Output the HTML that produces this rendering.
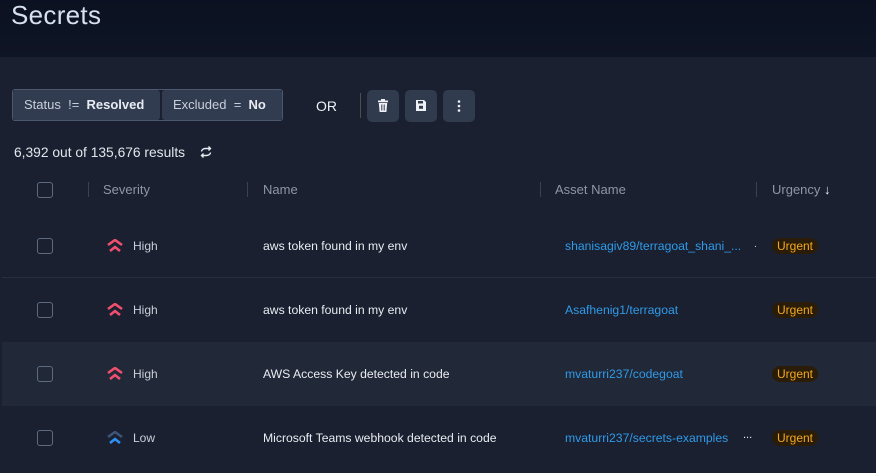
<!DOCTYPE html>
<html><head><style>
*{margin:0;padding:0;box-sizing:border-box}
body{width:876px;height:473px;overflow:hidden;background:#1a2030;font-family:"Liberation Sans",sans-serif;color:#e6e9ef;position:relative}
.hdr{position:absolute;left:0;top:0;width:876px;height:57px;background:linear-gradient(#0b1120,#0e1524)}
.hdr h1{position:absolute;left:11px;top:0px;font-size:26px;font-weight:400;color:#d6e0f0;letter-spacing:.3px}
.a{position:absolute;white-space:nowrap}
.chip{position:absolute;top:90px;height:30px;background:#323c50;border-radius:3px;font-size:13px;color:#c8cfdb;line-height:30px;padding-left:11px}
.chip b{color:#e8ecf2}
.btn{position:absolute;top:90px;width:32px;height:32px;background:#313b4e;border-radius:5px}
.hd{position:absolute;top:182px;font-size:13px;color:#8c96a8}
.sep{position:absolute;top:182px;width:1px;height:15px;background:#39424f}
.cb{position:absolute;left:37px;width:16px;height:16px;border:1.5px solid #5d6a80;border-radius:3px}
.row{position:absolute;left:2px;width:874px;height:64px}
.t{position:absolute;font-size:12.2px;color:#e8ebf0}
.sev{position:absolute;left:133px;font-size:12px;color:#c9ced8}
.asset{position:absolute;left:565px;font-size:12.2px;color:#2f9ae8}
.urg{position:absolute;left:772px;width:46px;height:16px;border-radius:8px;background:#2b1c08;color:#f0a81e;font-size:12px;line-height:16px;text-align:center}
</style></head><body>
<div class="hdr"><h1>Secrets</h1></div>
<div class="a" style="left:12px;top:89px;width:271px;height:32px;border:1.5px solid #4c5870;border-radius:3px"></div>
<div class="chip" style="left:13px;width:147px">Status&nbsp; != &nbsp;<b>Resolved</b></div>
<div class="chip" style="left:162px;width:120px">Excluded&nbsp; = &nbsp;<b>No</b></div>
<div class="a" style="left:316px;top:98px;font-size:14px;color:#eef1f5">OR</div>
<div class="a" style="left:360px;top:93px;width:1px;height:25px;background:#4a4f58"></div>
<div class="btn" style="left:367px"><svg width="32" height="32" viewBox="0 0 32 32"><path d="M11 10.5h10v1.8h-10z M14 9h4v1.5h-4z M11.8 13h8.4l-.8 9h-6.8z" fill="#eef1f5"/><path d="M14.8 14.5v6M17.2 14.5v6" stroke="#313b4e" stroke-width="1"/></svg></div>
<div class="btn" style="left:405px"><svg width="32" height="32" viewBox="0 0 32 32"><path d="M11 10h8l2 2v9h-10z" fill="#eef1f5"/><rect x="13" y="11" width="5" height="2.5" fill="#313b4e"/><rect x="14" y="15.8" width="4" height="3" fill="#313b4e"/></svg></div>
<div class="btn" style="left:443px"><svg width="32" height="32" viewBox="0 0 32 32"><circle cx="16" cy="11.5" r="1.3" fill="#eef1f5"/><circle cx="16" cy="16" r="1.3" fill="#eef1f5"/><circle cx="16" cy="20.5" r="1.3" fill="#eef1f5"/></svg></div>
<div class="a" style="left:14px;top:145px;font-size:13.8px;color:#e2e6ec">6,392 out of 135,676 results</div>
<svg class="a" style="left:199px;top:145px" width="14" height="14" viewBox="0 0 14 14"><path d="M2.5 6.5a4 3 0 0 1 4-3h5M9.5 1.5l2 2-2 2M11.5 7.5a4 3 0 0 1-4 3h-5M4.5 12.5l-2-2 2-2" fill="none" stroke="#e6e9ef" stroke-width="1.4"/></svg>
<div class="cb" style="top:182px"></div>
<div class="sep" style="left:88px"></div><div class="hd" style="left:103px">Severity</div>
<div class="sep" style="left:247px"></div><div class="hd" style="left:263px">Name</div>
<div class="sep" style="left:540px"></div><div class="hd" style="left:555px">Asset Name</div>
<div class="sep" style="left:756px"></div><div class="hd" style="left:772px">Urgency <span style="color:#e6e9ef">↓</span></div>

<div class="a" style="left:2px;top:277px;width:874px;height:1px;background:#262e3d"></div>
<div class="row" style="top:342px;background:#212837"></div>

<div class="cb" style="top:238px"></div>
<svg class="a" style="left:106px;top:239px" width="18" height="14" viewBox="0 0 18 14"><path d="M2 6l7-5 7 5M4 12l5-4 5 4" fill="none" stroke="#f0506e" stroke-width="2.6"/></svg>
<div class="sev" style="top:239px">High</div>
<div class="t" style="left:263px;top:239px">aws token found in my env</div>
<div class="asset" style="top:239px">shanisagiv89/terragoat_shani_...</div>
<div class="a" style="left:754px;top:239px;font-size:10px;color:#ddd">.</div>
<div class="urg" style="top:238px">Urgent</div>

<div class="cb" style="top:302px"></div>
<svg class="a" style="left:106px;top:303px" width="18" height="14" viewBox="0 0 18 14"><path d="M2 6l7-5 7 5M4 12l5-4 5 4" fill="none" stroke="#f0506e" stroke-width="2.6"/></svg>
<div class="sev" style="top:303px">High</div>
<div class="t" style="left:263px;top:303px">aws token found in my env</div>
<div class="asset" style="top:303px">Asafhenig1/terragoat</div>
<div class="urg" style="top:302px">Urgent</div>

<div class="cb" style="top:366px"></div>
<svg class="a" style="left:106px;top:367px" width="18" height="14" viewBox="0 0 18 14"><path d="M2 6l7-5 7 5M4 12l5-4 5 4" fill="none" stroke="#f0506e" stroke-width="2.6"/></svg>
<div class="sev" style="top:367px">High</div>
<div class="t" style="left:263px;top:367px">AWS Access Key detected in code</div>
<div class="asset" style="top:367px">mvaturri237/codegoat</div>
<div class="urg" style="top:366px">Urgent</div>

<div class="cb" style="top:430px"></div>
<svg class="a" style="left:106px;top:431px" width="18" height="14" viewBox="0 0 18 14"><path d="M2 6l7-5 7 5" fill="none" stroke="#3d5478" stroke-width="2.6"/><path d="M4 12l5-4 5 4" fill="none" stroke="#2f8ef0" stroke-width="2.6"/></svg>
<div class="sev" style="top:431px">Low</div>
<div class="t" style="left:263px;top:431px">Microsoft Teams webhook detected in code</div>
<div class="asset" style="top:431px">mvaturri237/secrets-examples</div>
<div class="a" style="left:743px;top:429px;font-size:11px;color:#eee">...</div>
<div class="urg" style="top:430px">Urgent</div>
</body></html>
